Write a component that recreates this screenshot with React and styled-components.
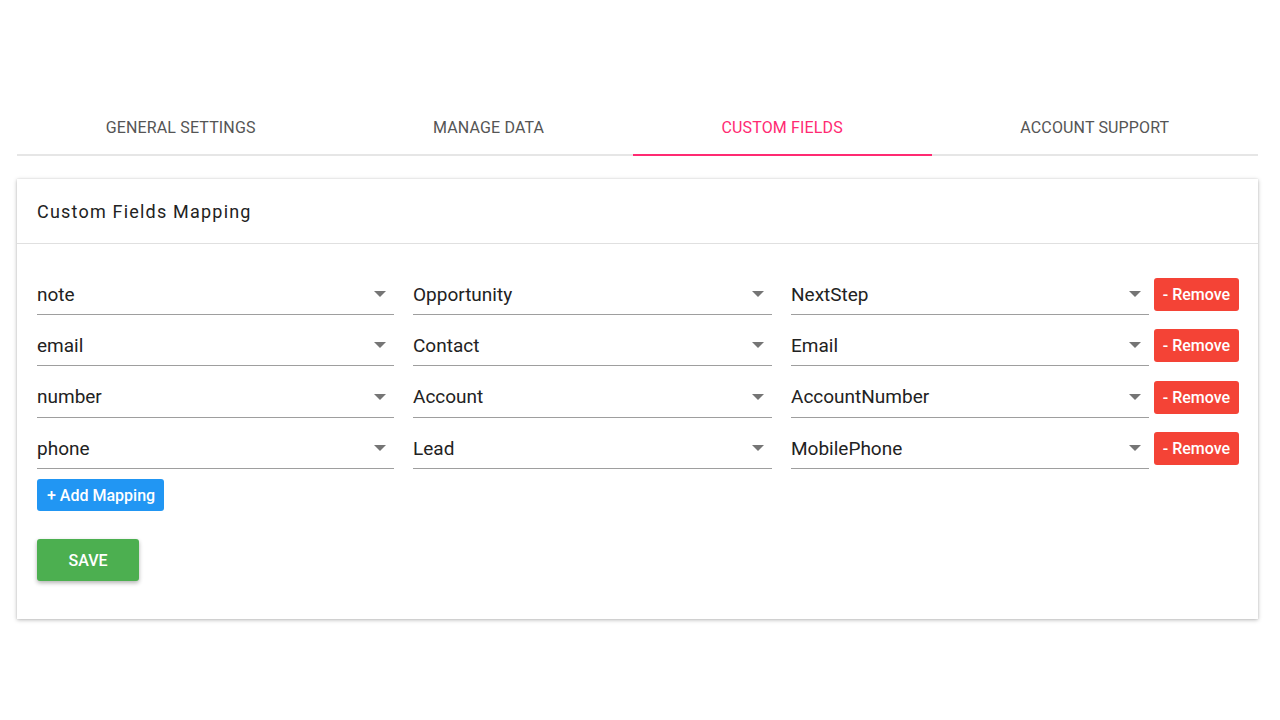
import React, { useState } from 'react';
import styled, { createGlobalStyle } from 'styled-components';

const GlobalStyle = createGlobalStyle`
  body {
    margin: 0;
    background: #ffffff;
    font-family: Roboto, "Liberation Sans", sans-serif;
  }
`;

const Page = styled.div`
  width: 1241px;
  margin-left: 17px;
  padding-top: 108px;
  padding-bottom: 60px;
`;

const TabBar = styled.div`
  display: flex;
  border-bottom: 2px solid #e6e6e6;
`;

const Tab = styled.div`
  flex: 1 1 auto;
  height: 48px;
  padding-bottom: 8px;
  box-sizing: border-box;
  display: flex;
  align-items: center;
  justify-content: center;
  font-size: 16px;
  font-weight: 400;
  letter-spacing: 0.15px;
  text-transform: uppercase;
  color: ${props => (props.active ? '#ff2a72' : '#555555')};
  margin-bottom: -2px;
  border-bottom: 2px solid ${props => (props.active ? '#ff2a72' : 'transparent')};
  cursor: pointer;
`;

const Card = styled.div`
  margin-top: 23px;
  background: #fff;
  box-shadow: 0 1px 4px rgba(0, 0, 0, 0.28), 0 0 1px rgba(0, 0, 0, 0.12);
`;

const CardHeader = styled.div`
  height: 64px;
  display: flex;
  align-items: center;
  padding: 0 20px;
  font-size: 18px;
  letter-spacing: 1.2px;
  color: #222;
  border-bottom: 1px solid #e0e0e0;
`;

const CardBody = styled.div`
  padding: 25px 19px 38px 20px;
`;

const Row = styled.div`
  display: flex;
  align-items: center;
  height: 51.33px;
`;

const SelectField = styled.div`
  width: ${props => props.width}px;
  height: 40px;
  margin-right: ${props => props.gap}px;
  display: flex;
  align-items: center;
  justify-content: space-between;
  border-bottom: 1px solid #9e9e9e;
  font-size: 19px;
  color: #222;
  box-sizing: content-box;
`;

const Arrow = styled.span`
  width: 0;
  height: 0;
  margin-right: 8px;
  border-left: 6px solid transparent;
  border-right: 6px solid transparent;
  border-top: 6px solid #757575;
`;

const Button = styled.button`
  border: none;
  border-radius: 3px;
  font-family: Roboto, "Liberation Sans", sans-serif;
  font-weight: 500;
  color: #fff;
  cursor: pointer;
`;

const RemoveButton = styled(Button)`
  width: 85px;
  height: 33px;
  padding: 0;
  font-size: 16px;
  background: #f44336;
`;

const AddButton = styled(Button)`
  margin-top: 5px;
  height: 32px;
  padding: 0 9px 0 10px;
  font-size: 16px;
  background: #2196f3;
`;

const SaveButton = styled(Button)`
  display: block;
  margin-top: 28px;
  width: 102px;
  height: 42px;
  font-size: 16px;
  text-transform: uppercase;
  background: #4caf50;
  box-shadow: 0 2px 4px rgba(0, 0, 0, 0.3);
`;

const tabs = ['General Settings', 'Manage Data', 'Custom Fields', 'Account Support'];

const mappings = [
  ['note', 'Opportunity', 'NextStep'],
  ['email', 'Contact', 'Email'],
  ['number', 'Account', 'AccountNumber'],
  ['phone', 'Lead', 'MobilePhone'],
];

const widths = [357, 359, 358];
const gaps = [19, 19, 5];

const App = () => {
  const [active, setActive] = useState(2);

  return (
    <Page>
      <GlobalStyle />
      <TabBar>
        {tabs.map((t, i) => (
          <Tab key={t} active={i === active} onClick={() => setActive(i)}>
            {t}
          </Tab>
        ))}
      </TabBar>
      <Card>
        <CardHeader>Custom Fields Mapping</CardHeader>
        <CardBody>
          {mappings.map((row, r) => (
            <Row key={r}>
              {row.map((v, c) => (
                <SelectField key={c} width={widths[c]} gap={gaps[c]}>
                  {v}
                  <Arrow />
                </SelectField>
              ))}
              <RemoveButton>- Remove</RemoveButton>
            </Row>
          ))}
          <AddButton>+ Add Mapping</AddButton>
          <SaveButton>Save</SaveButton>
        </CardBody>
      </Card>
    </Page>
  );
};

export default App;
